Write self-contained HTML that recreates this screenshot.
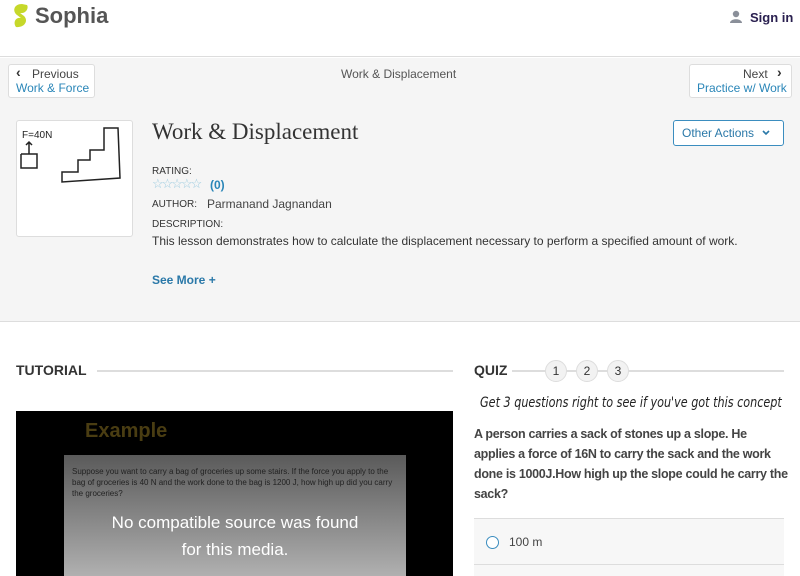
<!DOCTYPE html>
<html><head><style>
*{margin:0;padding:0;box-sizing:border-box}
body{width:800px;height:576px;overflow:hidden;font-family:"Liberation Sans",sans-serif;background:#fff;position:relative;color:#333}
.a{position:absolute}
</style></head><body>
<div class="a" style="left:0;top:0;width:800px;height:57px;background:#fff;border-bottom:1px solid #ddd"></div>
<svg class="a" style="left:10px;top:3px" width="22" height="26" viewBox="0 0 22 26"><path d="M12 1 C4 1 2 8 7 12 L11 15 C5 14 3 20 6 24 C14 25 19 18 14 13 L10 10 C16 11 19 5 17 2Z" fill="#c6d82a"/></svg>
<div class="a" style="left:35px;top:3px;font-size:22px;font-weight:bold;color:#555">Sophia</div>
<svg class="a" style="left:729px;top:10px" width="14" height="14" viewBox="0 0 14 14"><circle cx="7" cy="4" r="3.2" fill="#8a8f99"/><path d="M1 13 C1 8 13 8 13 13Z" fill="#8a8f99"/></svg>
<div class="a" style="left:750px;top:10px;font-size:13px;font-weight:bold;color:#2a2050">Sign in</div>
<div class="a" style="left:0;top:58px;width:800px;height:264px;background:#f5f5f5;border-bottom:1px solid #ddd"></div>
<div class="a" style="left:8px;top:64px;width:87px;height:34px;background:#fff;border:1px solid #ddd;border-radius:3px"></div>
<div class="a" style="left:16px;top:64px;font-size:14px;font-weight:bold">‹</div>
<div class="a" style="left:32px;top:67px;font-size:12px;color:#444">Previous</div>
<div class="a" style="left:16px;top:81px;font-size:12px;color:#2a86b8">Work &amp; Force</div>
<div class="a" style="left:341px;top:67px;font-size:12px;color:#555">Work &amp; Displacement</div>
<div class="a" style="left:689px;top:64px;width:103px;height:34px;background:#fff;border:1px solid #ddd;border-radius:3px"></div>
<div class="a" style="left:743px;top:67px;font-size:12px;color:#444">Next</div>
<div class="a" style="left:777px;top:64px;font-size:14px;font-weight:bold">›</div>
<div class="a" style="left:697px;top:81px;font-size:12px;color:#2a86b8">Practice w/ Work</div>
<div class="a" style="left:16px;top:120px;width:117px;height:117px;background:#fff;border:1px solid #ddd;border-radius:3px"></div>
<svg class="a" style="left:16px;top:120px" width="117" height="117"><g fill="none" stroke="#222" stroke-width="1.5"><path d="M5 34 V48 H21 V34 H5 M13 34 V22 M10 25 L13 22 L16 25"/><path d="M46 62 V52 H62 V40 H74 V30 H88 V8 H102 L104 58 Z"/></g><text x="6" y="18" font-size="10" fill="#222">F=40N</text></svg>
<div class="a" style="left:152px;top:119px;font-family:'Liberation Serif',serif;font-size:23px;color:#333">Work &amp; Displacement</div>
<div class="a" style="left:673px;top:120px;width:111px;height:26px;border:1px solid #3b8dbf;border-radius:3px;background:#fff"></div>
<div class="a" style="left:682px;top:126px;font-size:12px;color:#2a78a8">Other Actions</div>
<svg class="a" style="left:761px;top:128px" width="10" height="10"><path d="M2 3 L5 6 L8 3" stroke="#2a78a8" stroke-width="1.6" fill="none"/></svg>
<div class="a" style="left:152px;top:166px;font-size:10px;color:#333">RATING:</div>
<div class="a" style="left:152px;top:176px;font-size:13px;color:#9ccbe0;letter-spacing:-2px">☆☆☆☆☆</div>
<div class="a" style="left:210px;top:178px;font-size:12px;color:#2a86b8;font-weight:bold">(0)</div>
<div class="a" style="left:152px;top:199px;font-size:10px;color:#333">AUTHOR:</div>
<div class="a" style="left:207px;top:197px;font-size:12px;color:#444">Parmanand Jagnandan</div>
<div class="a" style="left:152px;top:219px;font-size:10px;color:#333">DESCRIPTION:</div>
<div class="a" style="left:152px;top:234px;font-size:12px;color:#333">This lesson demonstrates how to calculate the displacement necessary to perform a specified amount of work.</div>
<div class="a" style="left:152px;top:273px;font-size:12px;color:#2a78a8;font-weight:bold">See More +</div>
<div class="a" style="left:16px;top:362px;font-size:14px;font-weight:bold;color:#333">TUTORIAL</div>
<div class="a" style="left:97px;top:370px;width:356px;height:2px;background:#ddd"></div>
<div class="a" style="left:474px;top:362px;font-size:14px;font-weight:bold;color:#333">QUIZ</div>
<div class="a" style="left:512px;top:370px;width:272px;height:2px;background:#ddd"></div>
<div class="a" style="left:545px;top:360px;width:22px;height:22px;border-radius:50%;background:#f2f2f2;border:1px solid #ddd;font-size:12px;text-align:center;line-height:20px">1</div>
<div class="a" style="left:576px;top:360px;width:22px;height:22px;border-radius:50%;background:#f2f2f2;border:1px solid #ddd;font-size:12px;text-align:center;line-height:20px">2</div>
<div class="a" style="left:607px;top:360px;width:22px;height:22px;border-radius:50%;background:#f2f2f2;border:1px solid #ddd;font-size:12px;text-align:center;line-height:20px">3</div>
<div class="a" style="left:480px;top:395px;white-space:nowrap;font-size:14px;font-style:italic;font-family:'DejaVu Sans',sans-serif;color:#222;transform:scaleX(0.8);transform-origin:left">Get 3 questions right to see if you've got this concept</div>
<div class="a" style="left:474px;top:424px;white-space:nowrap;font-size:12.5px;line-height:20px;font-weight:bold;color:#444;letter-spacing:-0.3px">A person carries a sack of stones up a slope. He<br>applies a force of 16N to carry the sack and the work<br>done is 1000J.How high up the slope could he carry the<br>sack?</div>
<div class="a" style="left:474px;top:518px;width:310px;height:58px;background:#f7f7f7;border-top:1px solid #ddd"></div>
<div class="a" style="left:474px;top:564px;width:310px;height:1px;background:#ddd"></div>
<div class="a" style="left:486px;top:536px;width:13px;height:13px;border-radius:50%;border:1.5px solid #3b8dbf;background:#fff"></div>
<div class="a" style="left:509px;top:535px;font-size:12px;color:#444">100 m</div>
<div class="a" style="left:16px;top:411px;width:437px;height:165px;background:#000"></div>
<div class="a" style="left:85px;top:420px;font-size:20px;font-weight:bold;color:#4a3d12">Example</div>
<div class="a" style="left:64px;top:455px;width:342px;height:121px;background:linear-gradient(#5a5a5a,#b0b0b0)"></div>
<div class="a" style="left:72px;top:466px;width:330px;font-size:8px;line-height:11px;color:#222">Suppose you want to carry a bag of groceries up some stairs. If the force you apply to the bag of groceries is 40 N and the work done to the bag is 1200 J, how high up did you carry the groceries?</div>
<div class="a" style="left:64px;top:509px;width:342px;text-align:center;font-size:17px;line-height:27px;color:#fff">No compatible source was found<br>for this media.</div>
</body></html>
